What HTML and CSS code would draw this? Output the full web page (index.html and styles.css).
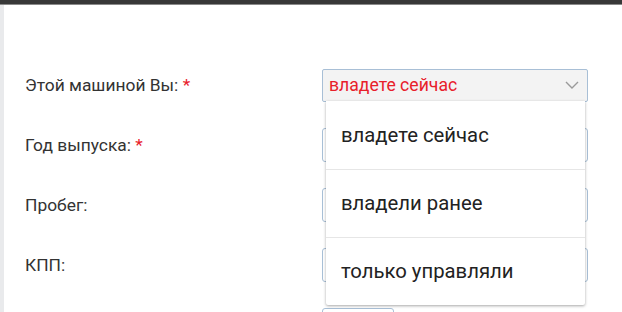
FILE: index.html
```html
<!DOCTYPE html>
<html lang="ru">
<head>
<meta charset="utf-8">
<link rel="stylesheet" href="styles.css">
</head>
<body>
<div class="topbar"></div>
<div class="page">
  <div class="side"></div>
  <form class="form">
    <div class="row">
      <label class="label">Этой машиной Вы: <span class="req">*</span></label>
      <div class="field">
        <div class="select">
          <span class="value">владете сейчас</span>
          <svg class="chev" width="14" height="8" viewBox="0 0 14 8"><path d="M1 1l6 6 6-6" fill="none" stroke="#9a9a9a" stroke-width="1.4"/></svg>
        </div>
        <ul class="menu">
          <li>владете сейчас</li>
          <li>владели ранее</li>
          <li>только управляли</li>
        </ul>
      </div>
    </div>
    <div class="row">
      <label class="label">Год выпуска: <span class="req">*</span></label>
      <div class="field"><div class="input"></div></div>
    </div>
    <div class="row">
      <label class="label">Пробег:</label>
      <div class="field"><div class="input"></div></div>
    </div>
    <div class="row">
      <label class="label">КПП:</label>
      <div class="field"><div class="input"></div></div>
    </div>
    <div class="row">
      <label class="label"></label>
      <div class="field"><div class="input small"></div></div>
    </div>
  </form>
</div>
</body>
</html>
```
FILE: styles.css
```css
html, body { margin: 0; padding: 0; background: #fff; overflow: hidden; }
body { font-family: Roboto, "Liberation Sans", sans-serif; color: #333; width: 622px; height: 312px; }
.topbar { height: 4px; background: #383838; border-bottom: 1px solid #8a8a8a; }
.page { display: flex; height: 307px; overflow: hidden; }
.side { width: 4px; background: #e9eaec; flex: none; }
.form { padding: 50px 0 0 21px; flex: 1; }
.row { display: flex; align-items: center; height: 60px; margin: 0; }
.label { width: 297px; font-size: 17.4px; color: #333; }
.req { color: #e8202a; }
.field { position: relative; width: 266px; }
.select { box-sizing: border-box; height: 33px; border: 1px solid #a8bfd6; border-radius: 2px; background: #f3f3f3; display: flex; align-items: center; justify-content: space-between; padding: 0 8px 0 6px; }
.value { color: #e8202a; font-size: 17.6px; }
.input { box-sizing: border-box; height: 34px; border: 1px solid #a8bfd6; border-radius: 3px; background: #fff; }
.input.small { width: 72px; }
.menu { position: absolute; left: 4px; top: 32px; width: 259px; margin: 0; padding: 0; list-style: none; background: #fff; box-shadow: 0 1px 3px rgba(0,0,0,0.35); border-radius: 0 0 2px 2px; z-index: 5; }
.menu li { height: 68px; box-sizing: border-box; display: flex; align-items: center; padding-left: 15px; font-size: 20.3px; color: #222; border-top: 1px solid #e6e6e6; }
.menu li:first-child { border-top: none; }
```
